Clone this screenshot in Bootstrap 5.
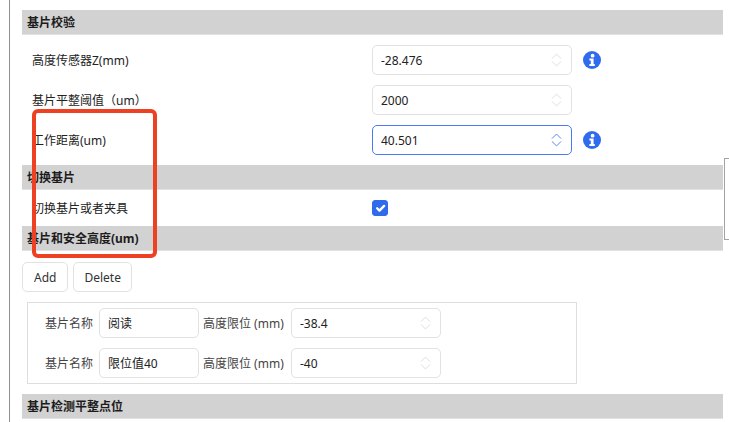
<!DOCTYPE html>
<html lang="zh">
<head>
<meta charset="utf-8">
<title>基片校验</title>
<link href="https://cdn.jsdelivr.net/npm/bootstrap@5.3.0/dist/css/bootstrap.min.css" rel="stylesheet">
<style>
html,body{height:422px;overflow:hidden;background:#fff}
body{font-family:"Noto Sans","Noto Sans CJK SC",sans-serif;font-size:12px;color:#222;position:relative}
.frame{margin-left:9px;border-left:1px solid #8f8f8f;padding:10px 0 0 12px;width:714px;height:422px}
.sect{height:25px;background:#d2d2d2;border-bottom:1px solid #e2e2e2;padding-left:5px;font-weight:700;font-size:12px;line-height:26px;color:#1c1c1c}
.sect.spaced{margin-top:10px}
.fieldrow{height:30px;margin-top:10px}
.fieldlabel{width:350px;padding-left:10px;padding-top:2px}
.spin{position:relative;width:200px}
.spin .form-control,.namebox{height:30px;min-height:30px;border:1px solid #e2e2e2;border-radius:5px;font-size:12px;padding:0 8px;color:#222;box-shadow:none}
.spin .active-input{border-color:#4a7cf0}
.spinicon{position:absolute;right:10px;top:7px;width:11px;height:16px;color:#dcdcdc}
.active-input + .spinicon{color:#4a7cf0}
.infoicon{width:18px;height:18px;margin-left:11px}
.checkrow{height:36px}
.form-check-input.bluecheck{width:16px;height:16px;margin:0;border-radius:3px;background-color:#2f6bed;border-color:#2f6bed;box-shadow:none;opacity:1;background-size:15px}
.actions{margin-top:11px;height:30px}
.plainbtn{height:30px;padding:1px 11px 0;font-size:12px;line-height:28px;border:1px solid #e2e2e2;border-radius:5px;color:#333;background:#fff}
.plainbtn.wide{padding:1px 10px 0;margin-left:5px}
.listbox{margin:10px 0 10px 5px;width:550px;height:82px;border:1px solid #dedede;padding:5px 0 0 17px}
.listrow{height:30px;margin-bottom:10px}
.listlabel{width:54px;color:#444;padding-top:1px}
.namebox{width:100px;margin:0 4px 0 0}
.heightlabel{width:88px;color:#444;padding-top:1px}
.spin.short{width:150px}
.markbox{position:absolute;left:32px;top:109px;width:125px;height:149px;border:4px solid #ee4023;border-radius:6px;pointer-events:none}
.edgebox{position:absolute;left:724px;top:158px;width:10px;height:82px;border:1px solid #a3a3a3;background:#fff}
</style>
</head>
<body>
<div class="frame">
  <div class="sect">基片校验</div>
  <div class="fieldrow d-flex align-items-center">
    <div class="fieldlabel">高度传感器Z(mm)</div>
    <div class="spin"><input class="form-control" type="text" value="-28.476"><svg class="spinicon" viewBox="0 0 12 16" fill="none" stroke="currentColor"><path d="M1 6.5 6 1.5l5 5M1 9.5l5 5 5-5"/></svg></div>
    <svg class="infoicon" viewBox="0 0 18 18"><circle cx="9" cy="9" r="9" fill="#2f6bed"/><circle cx="9.6" cy="4.7" r="1.9" fill="#fff"/><path d="M6.4 7.6h4.2v5.4h1.2v1.9H6.4V13h1.4V9.5H6.4z" fill="#fff"/></svg>
  </div>
  <div class="fieldrow d-flex align-items-center">
    <div class="fieldlabel">基片平整阈值（um）</div>
    <div class="spin"><input class="form-control" type="text" value="2000"><svg class="spinicon" viewBox="0 0 12 16" fill="none" stroke="currentColor"><path d="M1 6.5 6 1.5l5 5M1 9.5l5 5 5-5"/></svg></div>
  </div>
  <div class="fieldrow d-flex align-items-center">
    <div class="fieldlabel">工作距离(um)</div>
    <div class="spin"><input class="form-control active-input" type="text" value="40.501"><svg class="spinicon" viewBox="0 0 12 16" fill="none" stroke="currentColor"><path d="M1 6.5 6 1.5l5 5M1 9.5l5 5 5-5"/></svg></div>
    <svg class="infoicon" viewBox="0 0 18 18"><circle cx="9" cy="9" r="9" fill="#2f6bed"/><circle cx="9.6" cy="4.7" r="1.9" fill="#fff"/><path d="M6.4 7.6h4.2v5.4h1.2v1.9H6.4V13h1.4V9.5H6.4z" fill="#fff"/></svg>
  </div>
  <div class="sect spaced">切换基片</div>
  <div class="checkrow d-flex align-items-center">
    <div class="fieldlabel">切换基片或者夹具</div>
    <input class="form-check-input bluecheck" type="checkbox" checked>
  </div>
  <div class="sect">基片和安全高度(um)</div>
  <div class="actions d-flex">
    <button class="btn plainbtn" type="button">Add</button>
    <button class="btn plainbtn wide" type="button">Delete</button>
  </div>
  <div class="listbox">
    <div class="listrow d-flex align-items-center">
      <div class="listlabel">基片名称</div>
      <input class="form-control namebox" type="text" value="阅读">
      <div class="heightlabel">高度限位 (mm)</div>
      <div class="spin short"><input class="form-control" type="text" value="-38.4"><svg class="spinicon" viewBox="0 0 12 16" fill="none" stroke="currentColor"><path d="M1 6.5 6 1.5l5 5M1 9.5l5 5 5-5"/></svg></div>
    </div>
    <div class="listrow d-flex align-items-center">
      <div class="listlabel">基片名称</div>
      <input class="form-control namebox" type="text" value="限位值40">
      <div class="heightlabel">高度限位 (mm)</div>
      <div class="spin short"><input class="form-control" type="text" value="-40"><svg class="spinicon" viewBox="0 0 12 16" fill="none" stroke="currentColor"><path d="M1 6.5 6 1.5l5 5M1 9.5l5 5 5-5"/></svg></div>
    </div>
  </div>
  <div class="sect">基片检测平整点位</div>
</div>
<div class="markbox"></div>
<div class="edgebox"></div>
<script src="https://cdn.jsdelivr.net/npm/bootstrap@5.3.0/dist/js/bootstrap.bundle.min.js"></script>
</body>
</html>
